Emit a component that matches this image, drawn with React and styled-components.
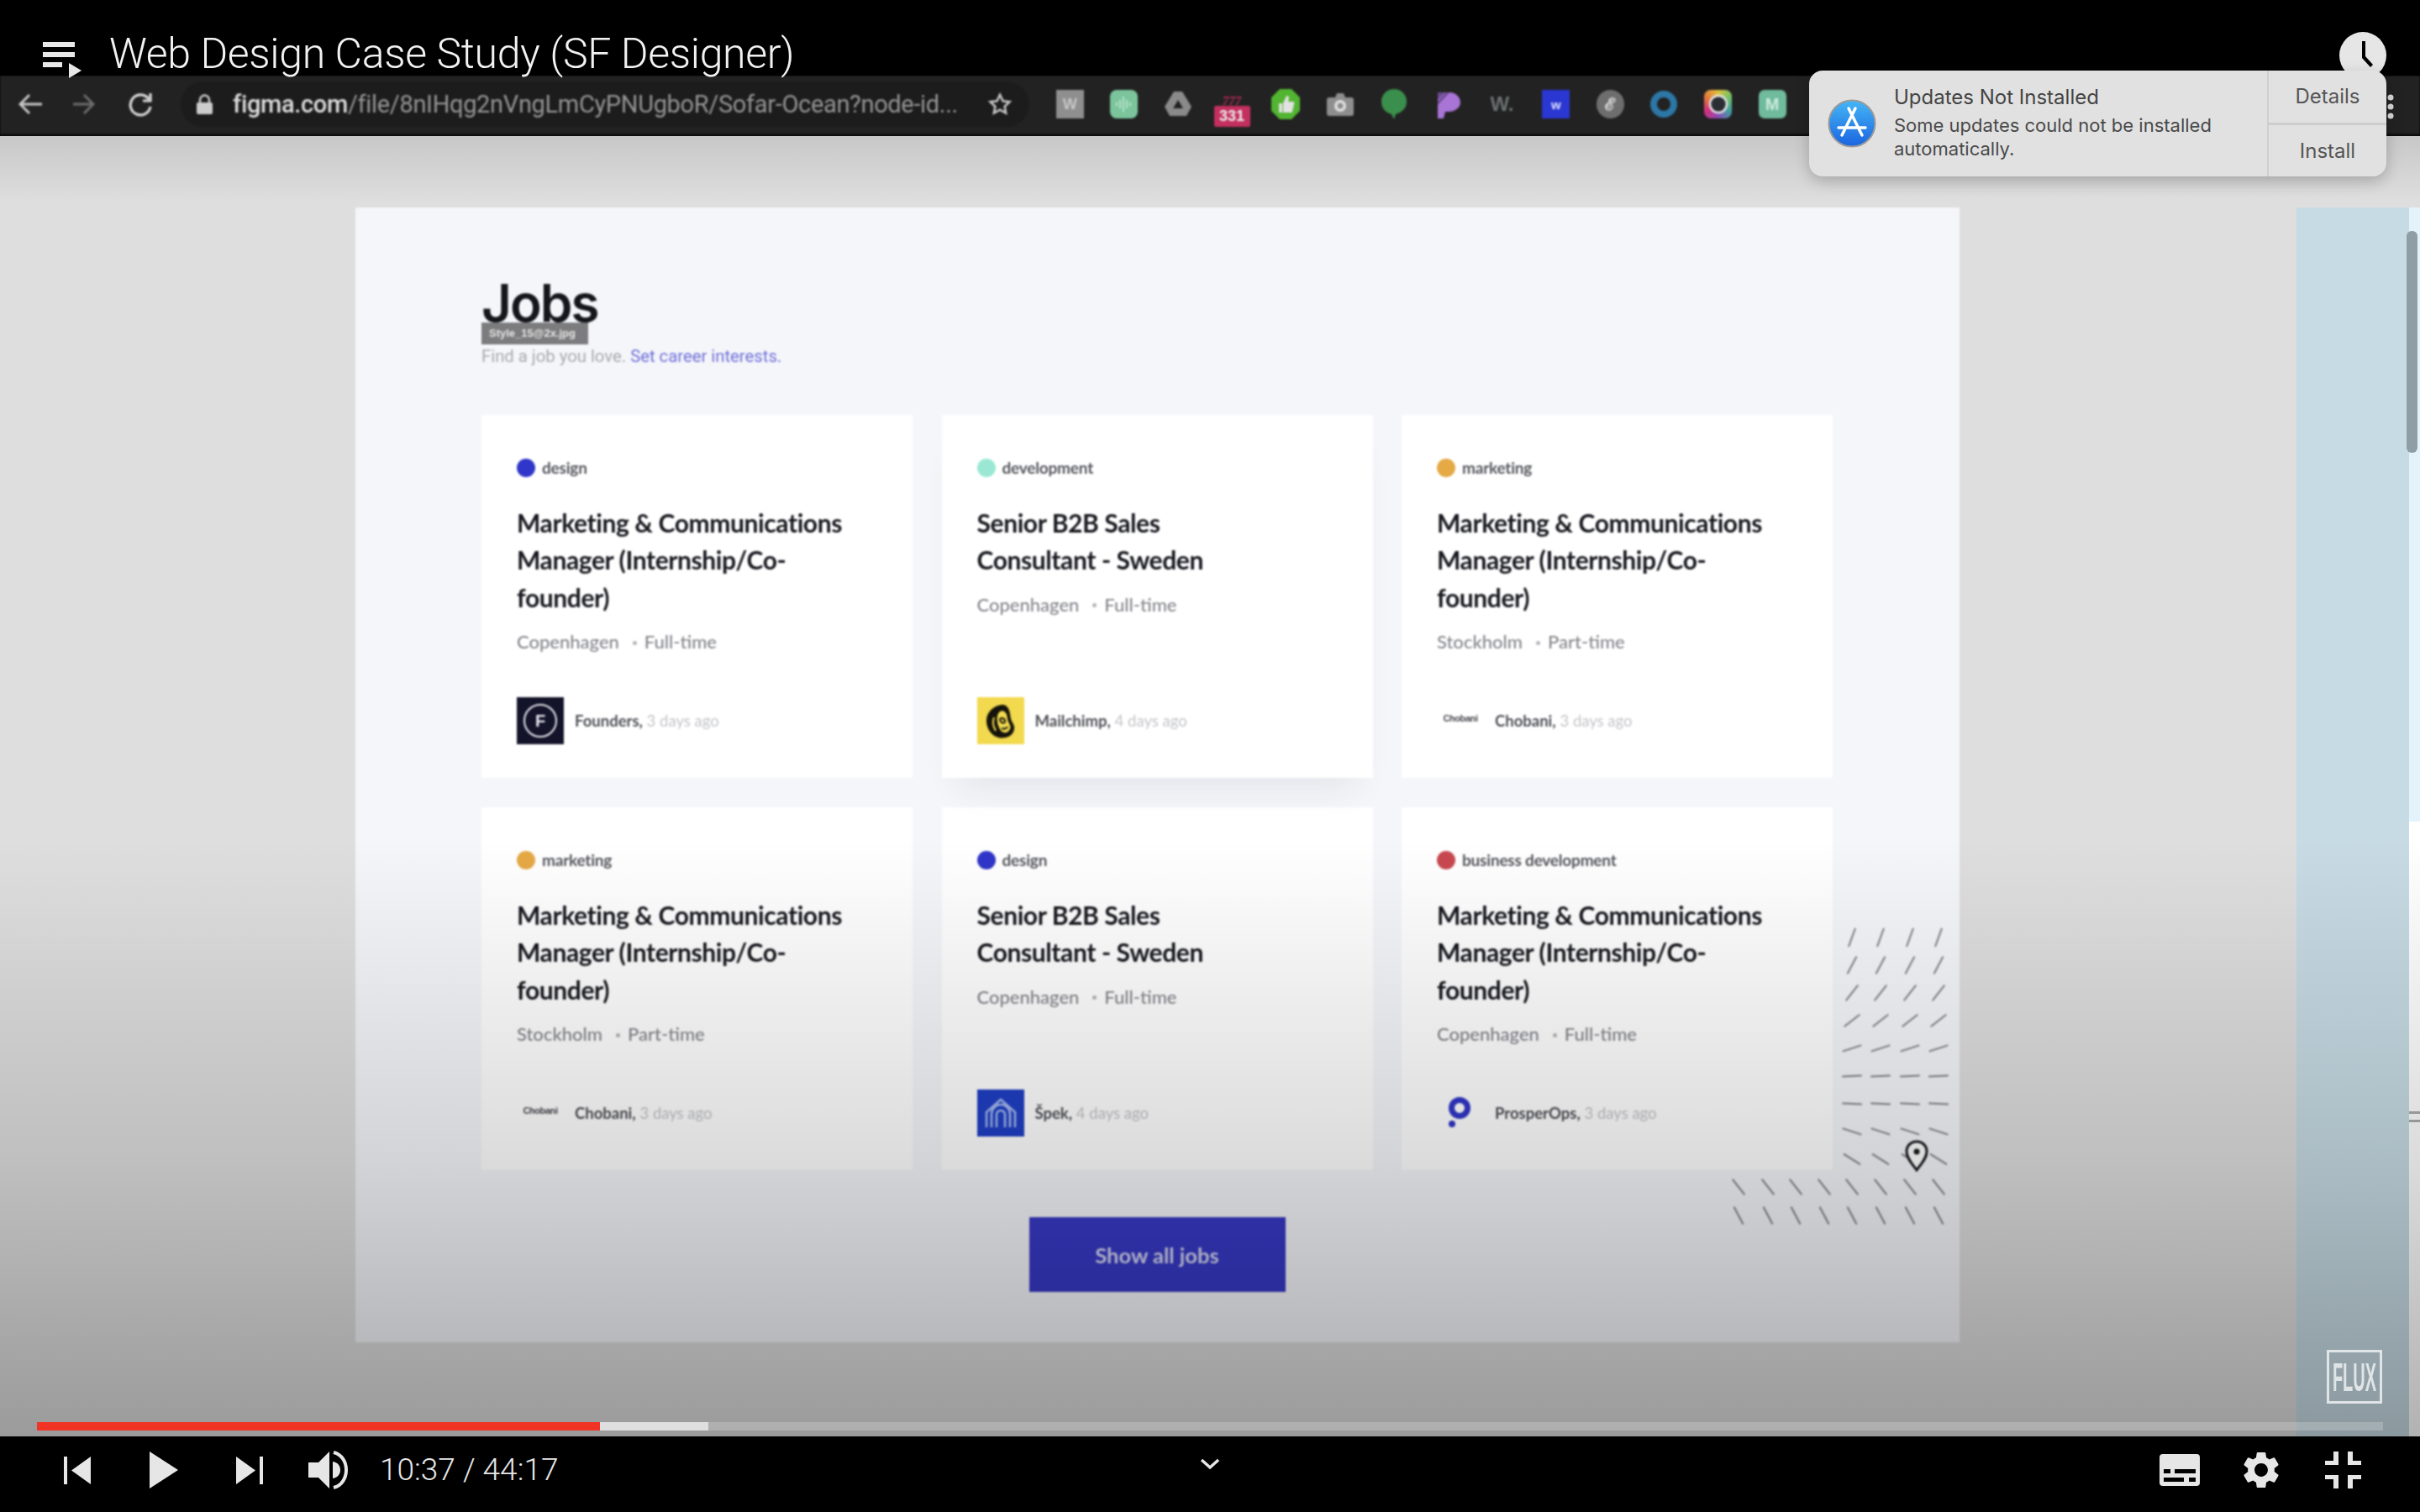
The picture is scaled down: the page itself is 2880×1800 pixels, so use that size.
import React from "react";
import styled, { createGlobalStyle } from "styled-components";

const GlobalStyle = createGlobalStyle`
  html, body { margin: 0; padding: 0; background: #000; }
  body { font-family: "Lato", "Liberation Sans", sans-serif; }
  * { box-sizing: border-box; }
`;

const Screen = styled.div`
  position: relative;
  width: 2880px;
  height: 1800px;
  display: flex;
  flex-direction: column;
  overflow: hidden;
  background: #000;
`;

/* player title bar */
const TitleBar = styled.header`
  position: relative;
  z-index: 2;
  flex: none;
  height: 90px;
  display: flex;
  align-items: flex-start;
  padding: 36px 40px 0 51px;
  background: #000;
`;

const VideoTitle = styled.h1`
  margin: 2px 0 0 33px;
  font: 300 50px/52px "Roboto", sans-serif;
  letter-spacing: -0.35px;
  color: #f2f2f2;
  white-space: nowrap;
  flex: 1;
`;

const TopIcon = styled.svg`
  display: block;
  flex: none;
  margin-top: ${(p) => p.$top || 0}px;
`;

/* browser toolbar burnt into the video */
const Toolbar = styled.div`
  flex: none;
  height: 72px;
  display: flex;
  align-items: center;
  padding: 0 0 1px 22px;
  background: #222;
  border-bottom: 3px solid #111;
  filter: blur(1px);
`;

const NavIcon = styled.svg`
  flex: none;
  margin-right: ${(p) => p.$mr}px;
`;

const Omnibox = styled.div`
  width: 1010px;
  height: 54px;
  flex: none;
  display: flex;
  align-items: center;
  padding-left: 19px;
  background: #1c1c1c;
  border-radius: 27px;
`;

const Url = styled.span`
  margin-left: 24px;
  width: 898px;
  font: 400 29px/36px "Roboto", sans-serif;
  letter-spacing: -0.33px;
  color: #949494;
  white-space: nowrap;
  b {
    font-weight: 500;
    color: #dcdcdc;
  }
`;

const Extensions = styled.div`
  display: flex;
  margin-left: 16px;
`;

const ExtSlot = styled.div`
  width: 64.3px;
  height: 50px;
  display: flex;
  align-items: center;
  justify-content: center;
`;

const ExtTile = styled.span`
  width: ${(p) => p.$w || 33}px;
  height: ${(p) => p.$h || 34}px;
  display: flex;
  align-items: center;
  justify-content: center;
  background: ${(p) => p.$bg || "transparent"};
  border-radius: ${(p) => p.$r || 0}px;
  font: 700 ${(p) => p.$fs || 16}px/1 "Liberation Sans", sans-serif;
  color: ${(p) => p.$fg || "#ddd"};
`;

const RedBadge = styled.span`
  display: flex;
  flex-direction: column;
  align-items: center;
  font: 700 18px/1 "Liberation Sans", sans-serif;
  color: #eee;
  transform: translateY(8px);
  i {
    font: italic 700 15px/12px "Liberation Serif", serif;
    color: #b92c58;
  }
  span {
    display: block;
    width: 43px;
    padding: 3px 0 4px;
    text-align: center;
    background: #c3305f;
    border-radius: 2px;
  }
`;

const MenuDots = styled.svg`
  position: absolute;
  top: 112px;
  left: 2841px;
`;

/* the video picture */
const Stage = styled.main`
  position: relative;
  flex: 1;
  display: flex;
  align-items: stretch;
  padding: 85px 0 0 423px;
  background: #dedede;
`;

const Panel = styled.section`
  position: relative;
  flex: 0 0 1909px;
  height: 1351px;
  padding: 83px 151px 0 150px;
  background: #f5f6fa;
  filter: blur(0.9px);
`;

const Heading = styled.h2`
  margin: 0 0 18px;
  font: 600 62px/62px "Inter", sans-serif;
  letter-spacing: -2px;
  color: #15161c;
`;

const FileTag = styled.span`
  position: absolute;
  left: 150px;
  top: 137px;
  width: 127px;
  height: 26px;
  padding-left: 9px;
  background: #7c7c7e;
  font: 700 13px/26px "Liberation Sans", sans-serif;
  color: #e4e4e4;
  white-space: nowrap;
`;

const Intro = styled.p`
  margin: 0 0 56px;
  font: 400 20.3px/28px "Roboto", sans-serif;
  color: #a9a9ae;
  a {
    color: #6f6fd8;
    text-decoration: none;
  }
`;

const Grid = styled.div`
  display: grid;
  grid-template-columns: repeat(3, 513px);
  grid-auto-rows: 432px;
  gap: 35px 34.5px;
`;

const Card = styled.article`
  position: relative;
  z-index: ${(p) => (p.$raised ? 1 : 0)};
  display: flex;
  flex-direction: column;
  padding: 50px 30px 40px 42px;
  background: #fff;
  box-shadow: ${(p) =>
    p.$raised ? "0 30px 40px -20px rgba(40, 40, 60, 0.09)" : "none"};
`;

const Tag = styled.div`
  display: flex;
  align-items: center;
  gap: 8px;
  height: 25px;
  font: 700 19px/25px "Lato", sans-serif;
  letter-spacing: -0.2px;
  color: #55565c;
`;

const Dot = styled.span`
  width: 22px;
  height: 22px;
  border-radius: 50%;
  background: ${(p) => p.$color};
`;

const JobTitle = styled.h3`
  margin: 31px 0 18px;
  font: 700 30px/44.4px "Lato", sans-serif;
  letter-spacing: -0.4px;
  color: #17181e;
  white-space: pre-line;
`;

const Meta = styled.div`
  display: flex;
  align-items: center;
  height: 26px;
  font: 500 22px/26px "Lato", sans-serif;
  color: #85868c;
  i {
    width: 5px;
    height: 5px;
    margin: 2px 9px 0 16px;
    border-radius: 50%;
    background: #b5b6ba;
  }
`;

const Footer = styled.div`
  display: flex;
  align-items: center;
  gap: 13px;
  margin-top: auto;
  font: 400 18.5px/24px "Lato", sans-serif;
  color: #c4c5c9;
  b {
    font-weight: 700;
    color: #4f5056;
  }
`;

const Logo = styled.span`
  flex: none;
  width: 56px;
  height: 56px;
  display: flex;
  align-items: center;
  justify-content: center;
  padding-bottom: ${(p) => p.$lift || 0}px;
  background: ${(p) => p.$bg || "transparent"};
  font: 700 11px/1 "Liberation Sans", sans-serif;
  letter-spacing: -0.4px;
  color: #45464c;
`;

const ShowAll = styled.button`
  display: block;
  width: 305px;
  height: 89px;
  margin: 56px auto 0;
  border: 0;
  background: #3739c6;
  font: 700 25.5px/89px "Lato", sans-serif;
  color: #d8d9f4;
`;

const Ticks = styled.svg`
  position: absolute;
  left: 1637px;
  top: 853px;
`;

const Pin = styled.svg`
  position: absolute;
  left: 1844px;
  top: 1110px;
`;

const SideStrip = styled.aside`
  margin-left: 401px;
  flex: 0 0 134px;
  background: #c7dbe4;
  filter: blur(0.6px);
`;

const SideEdge = styled.div`
  flex: 0 0 13px;
  background: linear-gradient(
    to bottom,
    #e4f3fb 0,
    #e4f3fb 731px,
    #fff 731px,
    #fff 1076px,
    #a9adad 1076px,
    #a9adad 1079px,
    #fff 1079px,
    #fff 1086px,
    #a9adad 1086px,
    #a9adad 1089px,
    #fff 1089px,
    #fff 100%
  );
`;

const ScrollThumb = styled.span`
  position: absolute;
  left: 2864px;
  top: 113px;
  width: 13px;
  height: 264px;
  border-radius: 6px;
  background: #8f9ea5;
`;

const Shade = styled.div`
  position: absolute;
  inset: 0;
  pointer-events: none;
  background: linear-gradient(
    to bottom,
    rgba(0, 0, 0, 0.1) 0,
    rgba(0, 0, 0, 0) 5%,
    rgba(0, 0, 0, 0) 54%,
    rgba(0, 0, 0, 0.14) 79%,
    rgba(0, 0, 0, 0.25) 93%,
    rgba(0, 0, 0, 0.3) 100%
  );
`;

const Watermark = styled.div`
  position: absolute;
  left: 2769px;
  top: 1445px;
  width: 66px;
  height: 64px;
  display: flex;
  align-items: center;
  justify-content: center;
  border: 3px solid #dfe4e6;
  font: 700 20px/20px "Liberation Sans", sans-serif;
  color: #dfe4e6;
  span {
    display: block;
    transform: scaleY(2.4);
    white-space: nowrap;
  }
`;

const Track = styled.div`
  position: absolute;
  left: 44px;
  right: 44px;
  bottom: 7px;
  height: 10px;
  background: rgba(255, 255, 255, 0.2);
`;

const TrackFill = styled.span`
  position: absolute;
  left: 0;
  top: 0;
  bottom: 0;
  width: ${(p) => p.$w}px;
  background: ${(p) => p.$color};
`;

/* player controls */
const Controls = styled.footer`
  flex: none;
  height: 90px;
  display: grid;
  grid-template-columns: 1fr auto 1fr;
  align-items: center;
  padding: 0 70px 10px 76px;
  background: #000;
`;

const ControlGroup = styled.div`
  display: flex;
  align-items: center;
  justify-content: ${(p) => (p.$end ? "flex-end" : "flex-start")};
`;

const CtrlIcon = styled.svg`
  display: block;
  flex: none;
  margin-left: ${(p) => p.$ml || 0}px;
  fill: #e6e6e6;
`;

const Time = styled.span`
  margin-left: 36px;
  font: 300 37px/44px "Roboto", sans-serif;
  color: #e6e6e6;
  white-space: nowrap;
`;

const Chevron = styled.svg`
  display: block;
  margin: 0 6px 14px 0;
`;

/* macOS notification */
const Notice = styled.div`
  position: absolute;
  z-index: 3;
  top: 84px;
  left: 2153px;
  width: 687px;
  height: 126px;
  display: flex;
  background: #e1e1e1;
  border-radius: 16px;
  box-shadow: 0 6px 18px rgba(0, 0, 0, 0.22);
  font-family: "Inter", "Liberation Sans", sans-serif;
  color: #4a4a4a;
`;

const NoticeBody = styled.div`
  flex: 1;
  display: flex;
  align-items: center;
  padding-left: 22px;
  gap: 21px;
`;

const NoticeText = styled.div`
  padding-bottom: 3px;
  font-size: 22px;
  line-height: 28px;
  strong {
    display: block;
    margin-bottom: 4px;
    font-size: 24px;
    font-weight: 400;
    line-height: 30px;
    color: #444;
  }
`;

const NoticeActions = styled.div`
  flex: 0 0 142px;
  display: flex;
  flex-direction: column;
  border-left: 2px solid #cfcfcf;
`;

const NoticeAction = styled.div`
  flex: 1;
  display: flex;
  align-items: center;
  justify-content: center;
  font-size: 24px;
  color: #555;
  & + & {
    border-top: 3px solid #cdcdcd;
  }
`;

const LONG_TITLE = "Marketing & Communications\nManager (Internship/Co-\nfounder)";
const SHORT_TITLE = "Senior B2B Sales\nConsultant - Sweden";

const jobs = [
  { tag: "design", color: "#2f36c9", title: LONG_TITLE, city: "Copenhagen", type: "Full-time", company: "Founders", age: "3 days ago", logo: "founders" },
  { tag: "development", color: "#9ae8d3", title: SHORT_TITLE, city: "Copenhagen", type: "Full-time", company: "Mailchimp", age: "4 days ago", logo: "mailchimp", raised: true },
  { tag: "marketing", color: "#e5a945", title: LONG_TITLE, city: "Stockholm", type: "Part-time", company: "Chobani", age: "3 days ago", logo: "chobani" },
  { tag: "marketing", color: "#e5a945", title: LONG_TITLE, city: "Stockholm", type: "Part-time", company: "Chobani", age: "3 days ago", logo: "chobani" },
  { tag: "design", color: "#2f36c9", title: SHORT_TITLE, city: "Copenhagen", type: "Full-time", company: "Špek", age: "4 days ago", logo: "spek" },
  { tag: "business development", color: "#c94850", title: LONG_TITLE, city: "Copenhagen", type: "Full-time", company: "ProsperOps", age: "3 days ago", logo: "prosper" },
];

const CompanyLogo = ({ kind }) => {
  if (kind === "founders") {
    return (
      <Logo $bg="#13142a">
        <svg width="56" height="56" viewBox="0 0 56 56">
          <circle cx="28" cy="28" r="19" fill="none" stroke="#e8e8ee" strokeWidth="2" />
          <text x="28" y="35" textAnchor="middle" fontFamily="Liberation Sans" fontWeight="700" fontSize="20" fill="#e8e8ee">F</text>
        </svg>
      </Logo>
    );
  }
  if (kind === "mailchimp") {
    return (
      <Logo $bg="#f2d94e">
        <svg width="56" height="56" viewBox="0 0 56 56">
          <path d="M29 9c-9 1-17 8-18 17-1 9 5 20 14 22 9 2 18-2 19-10 1-5-3-8-4-12-1-5-1-12-5-15-2-2-4-2-6-2z" fill="#15130a" />
          <path d="M27 17c6-3 9 4 9 9 1 5 5 8 3 12-3 6-10 5-12 0-4-7-5-17 0-21z" fill="#f2d94e" />
          <path d="M29 25c3 0 4 2 4 4s-2 2-4 1-3-5 0-5zM29 37c3 1 6 1 7-2" fill="none" stroke="#15130a" strokeWidth="2" />
          <path d="M20 24c-2 5-1 11 2 16" fill="none" stroke="#f2d94e" strokeWidth="2" />
        </svg>
      </Logo>
    );
  }
  if (kind === "spek") {
    return (
      <Logo $bg="#1f3fc4">
        <svg width="56" height="56" viewBox="0 0 56 56" fill="none" stroke="#a9bdf2" strokeWidth="2.500">
          <path d="M11 45V27L28 12l17 15v18" />
          <path d="M17 45V29c0-6 5-11 11-11s11 5 11 11v16" />
          <path d="M23 45V30c0-3 2-5 5-5s5 2 5 5v15" />
        </svg>
      </Logo>
    );
  }
  if (kind === "prosper") {
    return (
      <Logo>
        <svg width="56" height="56" viewBox="0 0 56 56">
          <circle cx="27" cy="22" r="9.500" fill="none" stroke="#3036c8" strokeWidth="7" />
          <circle cx="18" cy="41" r="4" fill="#3036c8" />
        </svg>
      </Logo>
    );
  }
  return <Logo $lift={6}>Chobani</Logo>;
};

const tickAngles = [70, 62, 52, 38, 18, 3, -3, -18, -32, -52, -62];
const tickRows = [16, 49, 82, 115, 148, 181, 214, 247, 280, 313, 347];
const tickColsRight = [144, 178, 213, 247];
const tickColsLeft = [9, 44, 77, 111];

const TickField = () => {
  const ticks = [];
  tickRows.forEach((y, r) => {
    const cols = r > 8 ? [...tickColsLeft, ...tickColsRight] : tickColsRight;
    cols.forEach((x) => {
      const a = (tickAngles[r] * Math.PI) / 180;
      const dx = Math.cos(a) * 11;
      const dy = Math.sin(a) * 11;
      ticks.push(<line key={`${r}-${x}`} x1={x - dx} y1={y + dy} x2={x + dx} y2={y - dy} />);
    });
  });
  return (
    <Ticks width="262" height="370" stroke="#818286" strokeWidth="2" strokeLinecap="round">
      {ticks}
    </Ticks>
  );
};

const Ext = ({ children }) => <ExtSlot>{children}</ExtSlot>;

const ExtensionRow = () => (
  <Extensions>
    <Ext><ExtTile $bg="#8f8f8f" $fs={18} $fg="#c8c8c8">W</ExtTile></Ext>
    <Ext>
      <ExtTile $bg="#7cc59c" $r={8}>
        <svg width="24" height="24" viewBox="0 0 24 24" stroke="#b4e3c8" strokeWidth="2"><path d="M12 3v18M8 7v10M16 7v10M4 10v4M20 10v4" /></svg>
      </ExtTile>
    </Ext>
    <Ext>
      <svg width="32" height="30" viewBox="0 0 32 30"><path d="M11 0h10l11 18-6 11H6L0 18z" fill="#8a8a8a" /><path d="M16 10l6 10H10z" fill="#222" /></svg>
    </Ext>
    <Ext>
      <RedBadge><i>777</i><span>331</span></RedBadge>
    </Ext>
    <Ext>
      <svg width="34" height="36" viewBox="0 0 34 36"><path d="M10 0h14l10 10v16L24 36H10L0 26V10z" fill="#52b531" /><path d="M9 17h4v11H9zM14 17l4-9c2 0 3 1 3 3l-1 4h6c1 0 2 1 1 3l-2 9c0 1-1 1-2 1H14z" fill="#e2e2e2" /></svg>
    </Ext>
    <Ext>
      <svg width="32" height="28" viewBox="0 0 32 28"><path d="M3 6h7l2-5h8l2 5h7c2 0 3 1 3 3v16c0 2-1 3-3 3H3c-2 0-3-1-3-3V9c0-2 1-3 3-3z" fill="#8e8e8e" /><circle cx="16" cy="16" r="7" fill="#e0e0e0" /><circle cx="16" cy="16" r="3.500" fill="#8e8e8e" /></svg>
    </Ext>
    <Ext>
      <svg width="30" height="36" viewBox="0 0 30 36"><path d="M15 0c8 0 15 6 15 15 0 8-6 13-13 15l-2 6-3-6C5 28 0 23 0 15 0 6 7 0 15 0z" fill="#3b8f4d" /></svg>
    </Ext>
    <Ext>
      <svg width="30" height="34" viewBox="0 0 30 34"><path d="M3 3h14c8 0 13 6 13 12s-6 11-14 11h-4l-2 8H3z" fill="#a874d6" /><path d="M3 3h9L3 12zM13 3h4L3 18v-4z" fill="#6c4a8e" /></svg>
    </Ext>
    <Ext><ExtTile $fs={24} $fg="#6d7272" $w={34}>W.</ExtTile></Ext>
    <Ext><ExtTile $bg="#2b37d2" $fs={15} $fg="#dfe2ff">w</ExtTile></Ext>
    <Ext><ExtTile $bg="#6e6e6e" $r={17} $fs={20} $fg="#dcdcdc">ℰ</ExtTile></Ext>
    <Ext>
      <svg width="34" height="34" viewBox="0 0 34 34"><circle cx="17" cy="17" r="12" fill="none" stroke="#2c77a6" strokeWidth="8" /></svg>
    </Ext>
    <Ext>
      <ExtTile $r={8} $bg="conic-gradient(#e2c03d, #6fc46a, #3f9fa0, #8a4bb8, #d22f7a, #e2793d, #e2c03d)">
        <svg width="24" height="24" viewBox="0 0 24 24"><circle cx="12" cy="12" r="10" fill="#2a2d33" stroke="#e8e8e8" strokeWidth="2.500" /></svg>
      </ExtTile>
    </Ext>
    <Ext><ExtTile $bg="#6fbb9c" $r={7} $fs={20} $fg="#cdebdd">M</ExtTile></Ext>
  </Extensions>
);

const App = () => (
  <>
    <GlobalStyle />
    <Screen>
      <TitleBar>
        <TopIcon width="46" height="43" viewBox="0 0 46 43" $top={14} fill="#e8e8e8">
          <rect x="0" y="0" width="38" height="6" />
          <rect x="0" y="12" width="38" height="6" />
          <rect x="0" y="24" width="23" height="6" />
          <polygon points="31,25 46,34 31,43" />
        </TopIcon>
        <VideoTitle>Web Design Case Study (SF Designer)</VideoTitle>
        <TopIcon width="56" height="56" viewBox="0 0 56 56" $top={2}>
          <circle cx="28" cy="28" r="28" fill="#e6e6e6" />
          <path d="M27 11h4v18l9 10-3 3-10-11z" fill="#000" />
        </TopIcon>
      </TitleBar>

      <Toolbar>
        <NavIcon $mr={37} width="28" height="26" viewBox="0 0 28 26" fill="none" stroke="#c8c8c8" strokeWidth="3">
          <path d="M28 13H3M13 2L2 13l11 11" />
        </NavIcon>
        <NavIcon $mr={39} width="26" height="26" viewBox="0 0 26 26" fill="none" stroke="#6c6c6c" strokeWidth="3">
          <path d="M0 13h23M13 2l11 11-11 11" />
        </NavIcon>
        <NavIcon $mr={33} width="30" height="30" viewBox="0 0 30 30" fill="none" stroke="#d8d8d8" strokeWidth="3.200">
          <path d="M25 9a12 12 0 1 0 2 9" />
          <path d="M27 2v9h-9" />
        </NavIcon>
        <Omnibox>
          <svg width="19" height="24" viewBox="0 0 19 24">
            <path d="M4 10V7a5.500 5.500 0 0 1 11 0v3" fill="none" stroke="#ccc" strokeWidth="2.500" />
            <rect x="0" y="10" width="19" height="14" rx="2" fill="#ccc" />
          </svg>
          <Url><b>figma.com</b>/file/8nIHqg2nVngLmCyPNUgboR/Sofar-Ocean?node-id...</Url>
          <svg width="30" height="30" viewBox="0 0 24 24" fill="none" stroke="#c8c8c8" strokeWidth="2">
            <path d="M12 3l2.800 6 6.400.8-4.700 4.400 1.200 6.300-5.700-3.200-5.700 3.200 1.200-6.300L2.800 9.800 9.200 9z" />
          </svg>
        </Omnibox>
        <ExtensionRow />
      </Toolbar>
      <MenuDots width="8" height="30" fill="#d8d8d8">
        <circle cx="4" cy="4" r="3.500" />
        <circle cx="4" cy="15" r="3.500" />
        <circle cx="4" cy="26" r="3.500" />
      </MenuDots>

      <Stage>
        <Panel>
          <Heading>Jobs</Heading>
          <FileTag>Style_15@2x.jpg</FileTag>
          <Intro>
            Find a job you love. <a href="#interests">Set career interests.</a>
          </Intro>
          <Grid>
            {jobs.map((job, index) => (
              <Card key={index} $raised={job.raised}>
                <Tag>
                  <Dot $color={job.color} />
                  {job.tag}
                </Tag>
                <JobTitle>{job.title}</JobTitle>
                <Meta>
                  {job.city}
                  <i />
                  {job.type}
                </Meta>
                <Footer>
                  <CompanyLogo kind={job.logo} />
                  <span>
                    <b>{job.company},</b> {job.age}
                  </span>
                </Footer>
              </Card>
            ))}
          </Grid>
          <ShowAll>Show all jobs</ShowAll>
          <TickField />
          <Pin width="28" height="38" viewBox="0 0 28 38">
            <path d="M14 2C7 2 2 7 2 14c0 8 7 15 12 22 5-7 12-14 12-22 0-7-5-12-12-12z" fill="#fff" stroke="#17181e" strokeWidth="3" />
            <circle cx="14" cy="14" r="3.500" fill="#17181e" />
          </Pin>
        </Panel>
        <SideStrip />
        <SideEdge />
        <ScrollThumb />
        <Shade />
        <Watermark><span>FLUX</span></Watermark>
        <Track>
          <TrackFill $w={799} $color="rgba(255, 255, 255, 0.6)" />
          <TrackFill $w={670} $color="#f03324" />
        </Track>
      </Stage>

      <Controls>
        <ControlGroup>
          <CtrlIcon width="32" height="33" viewBox="0 0 32 33">
            <rect width="4" height="33" />
            <polygon points="32,0 32,33 9,16.500" />
          </CtrlIcon>
          <CtrlIcon $ml={70} width="34" height="44" viewBox="0 0 34 44">
            <polygon points="0,0 34,22 0,44" />
          </CtrlIcon>
          <CtrlIcon $ml={69} width="32" height="33" viewBox="0 0 32 33">
            <polygon points="0,0 23,16.500 0,33" />
            <rect x="28" width="4" height="33" />
          </CtrlIcon>
          <CtrlIcon $ml={54} width="49" height="48" viewBox="0 0 49 48">
            <polygon points="0,15 12,15 25,2 25,46 12,33 0,33" />
            <path d="M29 14c6 1 9 5 9 10s-3 9-9 10z" />
            <path d="M30 3c20 5 20 37 0 42" fill="none" stroke="#e6e6e6" strokeWidth="4" />
          </CtrlIcon>
          <Time>10:37 / 44:17</Time>
        </ControlGroup>
        <Chevron width="24" height="14" viewBox="0 0 24 14" fill="none" stroke="#e6e6e6" strokeWidth="3.500">
          <path d="M2 2l10 9 10-9" />
        </Chevron>
        <ControlGroup $end>
          <CtrlIcon width="48" height="38" viewBox="0 0 48 38">
            <rect width="48" height="38" rx="4" />
            <g fill="#000">
              <rect x="5" y="18" width="8" height="5" />
              <rect x="18" y="18" width="25" height="5" />
              <rect x="5" y="28" width="24" height="5" />
              <rect x="35" y="28" width="8" height="5" />
            </g>
          </CtrlIcon>
          <CtrlIcon $ml={52} width="42" height="44" viewBox="2.600 2 18.800 20">
            <path d="M19.140 12.940c.04-.3.06-.61.06-.94 0-.32-.02-.64-.07-.94l2.030-1.580c.18-.14.23-.41.12-.61l-1.920-3.320c-.12-.22-.37-.29-.59-.22l-2.390.96c-.5-.38-1.030-.7-1.620-.94l-.36-2.540c-.04-.24-.24-.41-.48-.41h-3.840c-.24 0-.43.17-.47.41l-.36 2.540c-.59.24-1.130.57-1.620.94l-2.390-.96c-.22-.08-.47 0-.59.22L2.740 8.870c-.12.21-.08.47.12.61l2.030 1.580c-.05.3-.09.63-.09.94s.02.64.07.94l-2.030 1.580c-.18.14-.23.41-.12.61l1.920 3.320c.12.22.37.29.59.22l2.390-.96c.5.38 1.030.7 1.620.94l.36 2.540c.05.24.24.41.48.41h3.840c.24 0 .44-.17.47-.41l.36-2.540c.59-.24 1.130-.56 1.620-.94l2.390.96c.22.08.47 0 .59-.22l1.920-3.320c.12-.22.07-.47-.12-.61l-2.010-1.580zM12 15.600c-1.980 0-3.600-1.620-3.600-3.600s1.620-3.600 3.600-3.600 3.600 1.620 3.600 3.600-1.620 3.600-3.600 3.600z" />
          </CtrlIcon>
          <CtrlIcon $ml={55} width="43" height="44" viewBox="0 0 43 44">
            <path d="M10 0h6v16H0v-5h10zM27 0h6v11h10v5H27zM0 28h16v16h-6V33H0zM27 28h16v5H33v11h-6z" />
          </CtrlIcon>
        </ControlGroup>
      </Controls>

      <Notice>
        <NoticeBody>
          <svg width="58" height="58" viewBox="0 0 58 58">
            <defs>
              <linearGradient id="storeBlue" x1="0" y1="0" x2="0" y2="1">
                <stop offset="0" stopColor="#45b6f5" />
                <stop offset="1" stopColor="#1a64e0" />
              </linearGradient>
            </defs>
            <circle cx="29" cy="29" r="27.500" fill="url(#storeBlue)" stroke="#9a9a9a" strokeWidth="2" />
            <g stroke="#fff" strokeWidth="3.500" strokeLinecap="round">
              <path d="M33 11L17 43M25 11l16 32M13 34h32" />
            </g>
          </svg>
          <NoticeText>
            <strong>Updates Not Installed</strong>
            Some updates could not be installed
            <br />
            automatically.
          </NoticeText>
        </NoticeBody>
        <NoticeActions>
          <NoticeAction>Details</NoticeAction>
          <NoticeAction>Install</NoticeAction>
        </NoticeActions>
      </Notice>
    </Screen>
  </>
);

export default App;
